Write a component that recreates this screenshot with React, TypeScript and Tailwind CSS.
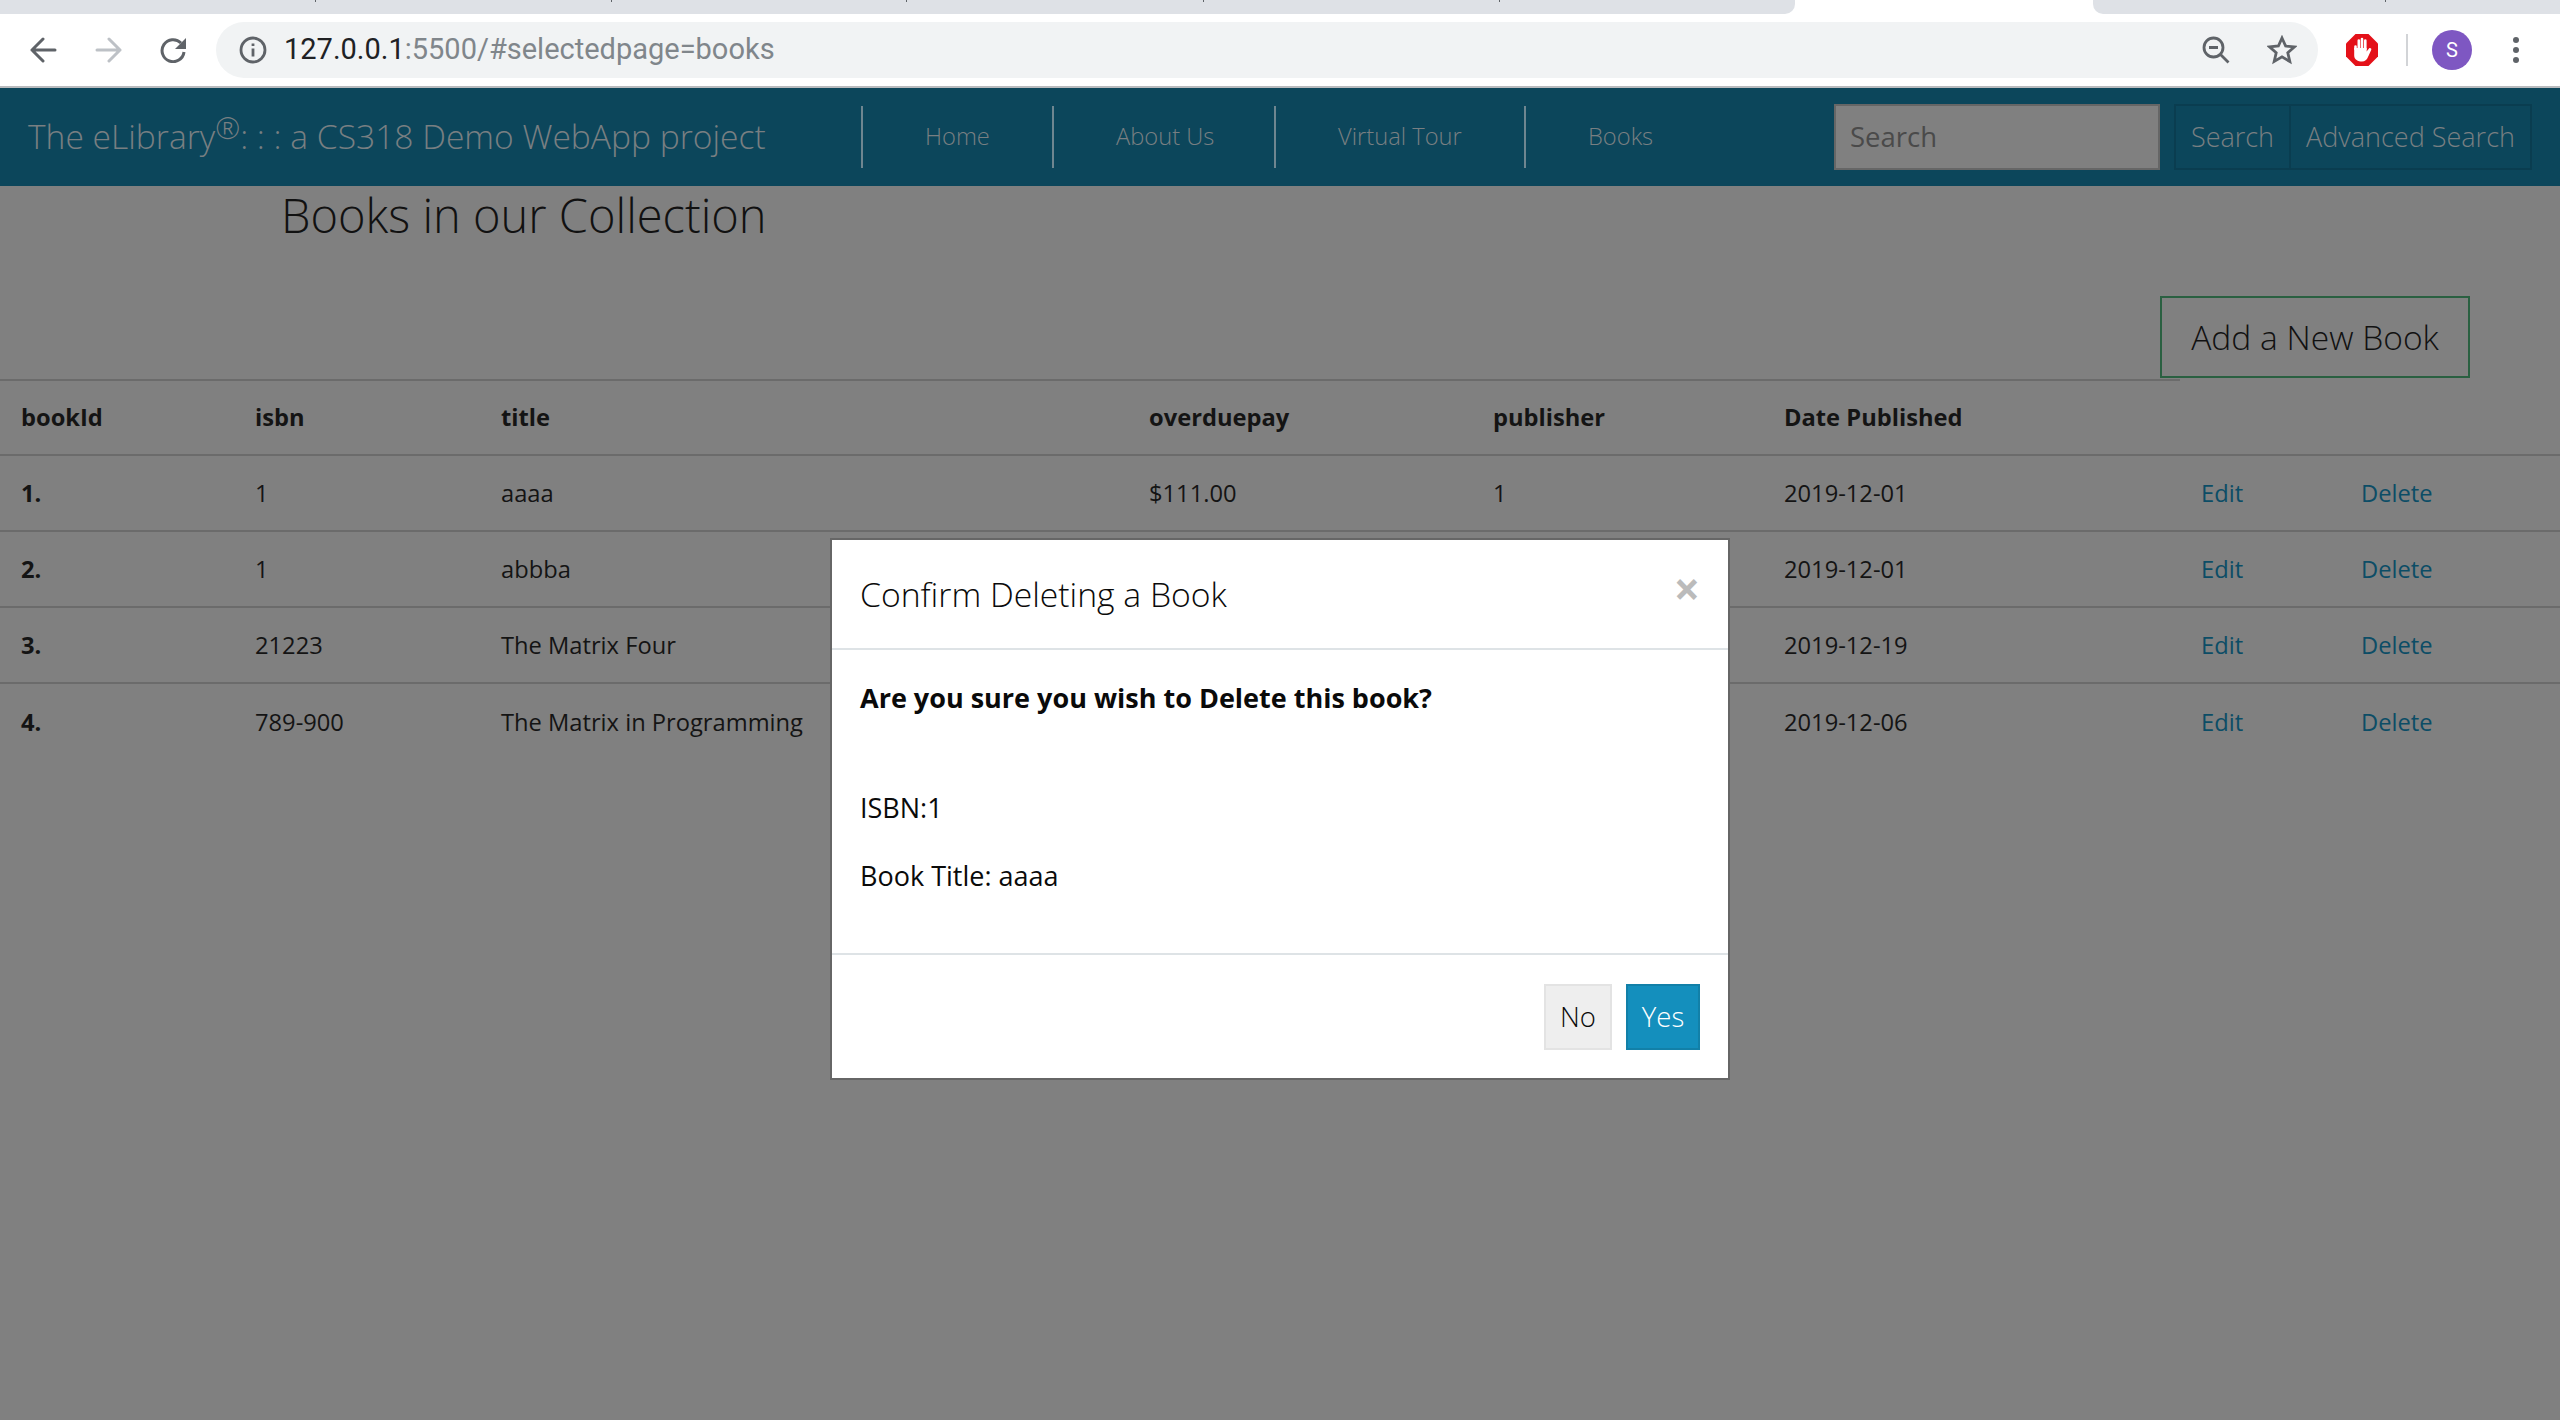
const rows = [
  { n: "1.", isbn: "1", title: "aaaa", pay: "$111.00", pub: "1", date: "2019-12-01" },
  { n: "2.", isbn: "1", title: "abbba", pay: "", pub: "", date: "2019-12-01" },
  { n: "3.", isbn: "21223", title: "The Matrix Four", pay: "", pub: "", date: "2019-12-19" },
  { n: "4.", isbn: "789-900", title: "The Matrix in Programming", pay: "", pub: "", date: "2019-12-06" },
];
const heads = ["bookId", "isbn", "title", "overduepay", "publisher", "Date Published", "", ""];
const widths = [234, 246, 648, 344, 291, 417, 160, 220];
const ticks = ["left-[315px]", "left-[611px]", "left-[906px]", "left-[1203px]", "left-[1499px]", "left-[2385px]"];

function BrowserChrome() {
  return (
    <div className="bg-white font-['Roboto',sans-serif]">
      <div className="relative flex h-[14px] bg-white">
        <div className="w-[1795px] rounded-br-[10px] bg-[#dee1e6]" />
        <div className="w-[298px]" />
        <div className="flex-1 rounded-bl-[10px] bg-[#dee1e6]" />
        {ticks.map((t) => <div key={t} className={`absolute top-0 h-[2px] w-[1px] bg-[#5f6368] ${t}`} />)}
      </div>
      <div className="flex h-[74px] items-center border-b-2 border-[#b9bbbe]">
        <div className="flex w-[216px] items-center">
          <svg className="ml-[30px]" width="27" height="26" viewBox="0 0 27 26" fill="none" stroke="#5f6368" strokeWidth="3" strokeLinecap="round" strokeLinejoin="round"><path d="M25 13H2M13 2 2 13l11 11" /></svg>
          <svg className="ml-[38px]" width="27" height="26" viewBox="0 0 27 26" fill="none" stroke="#bdc1c6" strokeWidth="3" strokeLinecap="round" strokeLinejoin="round"><path d="M2 13h23M14 2l11 11-11 11" /></svg>
          <svg className="ml-[37px]" width="28" height="26" viewBox="0 0 28 26" fill="none" stroke="#5f6368" strokeWidth="3"><path d="M22 6a11 11 0 1 0 3 9" /><path d="M27 1v11H16z" fill="#5f6368" stroke="none" /></svg>
        </div>
        <div className="flex h-[56px] w-[2102px] items-center rounded-full bg-[#f1f3f4] pl-[23px] pr-[21px]">
          <svg width="28" height="28" viewBox="0 0 28 28" fill="none" stroke="#5f6368" strokeWidth="2.800"><circle cx="14" cy="14" r="12" /><path d="M14 12.500v8M14 7.500v2.500" /></svg>
          <div className="ml-[17px] text-[29px] text-[#80868b]"><span className="text-[#202124]">127.0.0.1</span>:5500/#selectedpage=books</div>
          <div className="ml-auto flex items-center gap-[37px]">
            <svg width="28" height="28" viewBox="0 0 28 28" fill="none" stroke="#5f6368" strokeWidth="2.800"><circle cx="11.500" cy="11.500" r="9.500" /><path d="M7 11.500h9M18.500 18.500l8 8" /></svg>
            <svg width="30" height="30" viewBox="0 0 30 30" fill="none" stroke="#5f6368" strokeWidth="2.800"><path d="m15 3 3.600 8 8.900.9-6.700 5.800 2 8.800-7.800-4.600-7.800 4.600 2-8.800-6.700-5.800 8.900-.9z" /></svg>
          </div>
        </div>
        <svg className="ml-[28px]" width="32" height="32" viewBox="0 0 32 32">
          <path d="M9.500 0h13L32 9.500v13L22.500 32h-13L0 22.500v-13z" fill="#e41119" />
          <path d="M9.500 12.500V15M12.800 6.500v9M16 5v10M19.300 6.500v9" fill="none" stroke="#fff" strokeWidth="2.600" strokeLinecap="round" />
          <path d="M8.200 14h12.400v3.500l2.400-3c1-1.100 2.900 0 2.200 1.500l-3.200 7c-1.200 2.800-3 4.500-6 4.500-4 0-7.800-2-7.800-6z" fill="#fff" />
        </svg>
        <div className="ml-[28px] h-[32px] w-[2px] bg-[#d2d4d7]" />
        <div className="ml-[24px] flex h-[40px] w-[40px] items-center justify-center rounded-full bg-[#7e57c2] text-[20px] text-white">S</div>
        <svg className="ml-[39px]" width="10" height="32" viewBox="0 0 10 32" fill="#5f6368"><circle cx="5" cy="6" r="3" /><circle cx="5" cy="16" r="3" /><circle cx="5" cy="26" r="3" /></svg>
      </div>
    </div>
  );
}

function Navbar() {
  return (
    <div className="flex h-[98px] items-center bg-[#0c465b] font-['Open_Sans',sans-serif] font-light text-[#787f82]">
      <div className="w-[861px] whitespace-nowrap pl-[28px] text-[33.600px] leading-none">The eLibrary<sup className="top-[-10px] align-baseline text-[30px] leading-none">®</sup>: : : a CS318 Demo WebApp project</div>
      <div className="flex h-[62px] w-[973px] items-stretch text-[23.700px]">
        {[["Home", 191], ["About Us", 222], ["Virtual Tour", 250], ["Books", 310]].map(([t, w]) => (
          <div key={t} className="flex items-center border-l-2 border-[#6f8690] pl-[62px]" style={{ width: w as number }}>{t}</div>
        ))}
      </div>
      <div className="flex h-[66px] w-[326px] items-center border-2 border-[#666666] bg-[#808080] pl-[14px] text-[27.500px] font-normal text-[#4a4a4a]">Search</div>
      <div className="ml-[14px] flex h-[66px] border-2 border-[#0a3d50] text-[27px]">
        <div className="flex w-[115px] items-center justify-center border-r-2 border-[#0a3d50]">Search</div>
        <div className="flex w-[239px] items-center justify-center">Advanced Search</div>
      </div>
    </div>
  );
}

function BookTable() {
  return (
    <table className="w-full table-fixed border-separate border-spacing-0 text-[23.700px] text-[#141414]">
      <colgroup>{widths.map((w, i) => <col key={i} style={{ width: w }} />)}</colgroup>
      <thead>
        <tr className="h-[75px]">
          {heads.map((h, i) => <th key={i} className="border-b-2 border-[#6b6b6b] pl-[21px] text-left font-bold">{h}</th>)}
        </tr>
      </thead>
      <tbody>
        {rows.map((r, i) => {
          const cell = i < 3 ? "border-b-2 border-[#6b6b6b] pl-[21px] pt-[2px]" : "pl-[21px] pt-[1px]";
          return (
            <tr key={r.n} className="h-[76px]">
              <td className={`${cell} font-bold`}>{r.n}</td>
              <td className={cell}>{r.isbn}</td>
              <td className={cell}>{r.title}</td>
              <td className={cell}>{r.pay}</td>
              <td className={cell}>{r.pub}</td>
              <td className={cell}>{r.date}</td>
              <td className={`${cell} text-[#0c4d66]`}>Edit</td>
              <td className={`${cell} text-[#0c4d66]`}>Delete</td>
            </tr>
          );
        })}
      </tbody>
    </table>
  );
}

function Modal() {
  return (
    <div className="absolute left-[830px] top-[538px] h-[542px] w-[900px] border-2 border-[#666666] bg-white font-light text-[#0a0a0a]">
      <div className="relative flex h-[110px] items-center border-b-2 border-[#dee3e6] pl-[28px] text-[33.700px]">
        Confirm Deleting a Book
        <span className="absolute right-[28px] top-[25px] text-[46px] font-bold leading-none text-[#bbbbbb]">×</span>
      </div>
      <div className="h-[305px] border-b-2 border-[#dee3e6] px-[28px] text-[27px]">
        <p className="pt-[29px] font-bold leading-[38px]">Are you sure you wish to Delete this book?</p>
        <p className="mt-[72px] font-normal leading-[38px]">ISBN:1</p>
        <p className="mt-[30px] font-normal leading-[38px]">Book Title: aaaa</p>
      </div>
      <div className="flex justify-end gap-[14px] pr-[28px] pt-[29px] text-[27.500px]">
        <div className="flex h-[66px] w-[68px] items-center justify-center border-2 border-[#e3e3e3] bg-[#eeeeee]">No</div>
        <div className="flex h-[66px] w-[74px] items-center justify-center border-2 border-[#1280a8] bg-[#148fbd] text-white">Yes</div>
      </div>
    </div>
  );
}

export default function App() {
  return (
    <div className="relative h-[1420px] w-[2560px] overflow-hidden bg-[#808080] font-['Open_Sans',sans-serif]">
      <BrowserChrome />
      <Navbar />
      <div className="flex h-[193px] items-start">
        <h1 className="pl-[281px] pt-[1px] text-[47px] font-light leading-[56px] text-[#111111]">Books in our Collection</h1>
        <div className="ml-auto mr-[90px] mt-[110px] flex h-[82px] w-[310px] items-center justify-center border-2 border-[#2a6041] text-[33.600px] font-light text-[#111111]">Add a New Book</div>
      </div>
      <div className="h-[2px] w-[2180px] bg-[#6b6b6b]" />
      <BookTable />
      <Modal />
    </div>
  );
}
